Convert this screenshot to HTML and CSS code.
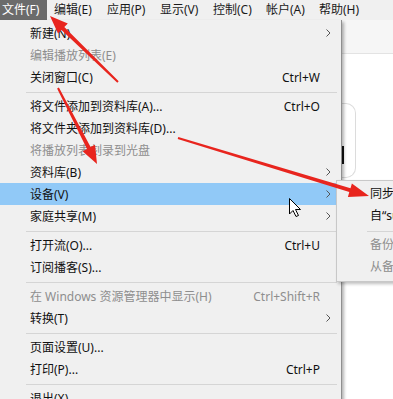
FILE: index.html
```html
<!DOCTYPE html>
<html>

<head>
    <title>文件菜单</title>
    <link rel="stylesheet" href="styles.css">
</head>

<body>
    <div class="menubar">
        <div class="top-item active">文件(F)</div>
        <div class="top-item">编辑(E)</div>
        <div class="top-item">应用(P)</div>
        <div class="top-item">显示(V)</div>
        <div class="top-item">控制(C)</div>
        <div class="top-item">帐户(A)</div>
        <div class="top-item">帮助(H)</div>
    </div>

    <div class="stage">
        <div class="menu">
            <div class="item"><span class="label">新建(N)</span><span class="key"></span><span class="chev"><svg width="5" height="8" viewBox="0 0 5 8"><path d="M0.5 0.5 L4 4 L0.5 7.5" /></svg></span></div>
            <div class="item disabled"><span class="label">编辑播放列表(E)</span><span class="key"></span><span class="chev"></span></div>
            <div class="item"><span class="label">关闭窗口(C)</span><span class="key">Ctrl+W</span><span class="chev"></span></div>
            <div class="sep"></div>
            <div class="item"><span class="label">将文件添加到资料库(A)...</span><span class="key">Ctrl+O</span><span class="chev"></span></div>
            <div class="item"><span class="label">将文件夹添加到资料库(D)...</span><span class="key"></span><span class="chev"></span></div>
            <div class="item disabled"><span class="label">将播放列表刻录到光盘</span><span class="key"></span><span class="chev"></span></div>
            <div class="item"><span class="label">资料库(B)</span><span class="key"></span><span class="chev"><svg width="5" height="8" viewBox="0 0 5 8"><path d="M0.5 0.5 L4 4 L0.5 7.5" /></svg></span></div>
            <div class="item hover"><span class="label">设备(V)</span><span class="key"></span><span class="chev"><svg width="5" height="8" viewBox="0 0 5 8"><path d="M0.5 0.5 L4 4 L0.5 7.5" /></svg></span></div>
            <div class="item"><span class="label">家庭共享(M)</span><span class="key"></span><span class="chev"><svg width="5" height="8" viewBox="0 0 5 8"><path d="M0.5 0.5 L4 4 L0.5 7.5" /></svg></span></div>
            <div class="sep"></div>
            <div class="item"><span class="label">打开流(O)...</span><span class="key">Ctrl+U</span><span class="chev"></span></div>
            <div class="item"><span class="label">订阅播客(S)...</span><span class="key"></span><span class="chev"></span></div>
            <div class="sep"></div>
            <div class="item disabled"><span class="label">在 Windows 资源管理器中显示(H)</span><span class="key">Ctrl+Shift+R</span><span class="chev"></span></div>
            <div class="item"><span class="label">转换(T)</span><span class="key"></span><span class="chev"><svg width="5" height="8" viewBox="0 0 5 8"><path d="M0.5 0.5 L4 4 L0.5 7.5" /></svg></span></div>
            <div class="sep"></div>
            <div class="item"><span class="label">页面设置(U)...</span><span class="key"></span><span class="chev"></span></div>
            <div class="item"><span class="label">打印(P)...</span><span class="key">Ctrl+P</span><span class="chev"></span></div>
            <div class="sep"></div>
            <div class="item"><span class="label">退出(X)</span><span class="key"></span><span class="chev"></span></div>
        </div>

        <div class="side">
            <div class="side-top"></div>
            <div class="card">
                <div class="mark"></div>
            </div>
        </div>

        <!-- submenu of 设备 -->
        <div class="submenu">
            <div class="sub-item">同步“iPhone”</div>
            <div class="sub-item">自“sun的 iPhone”传输购买项目</div>
            <div class="sub-sep"></div>
            <div class="sub-item disabled">备份</div>
            <div class="sub-item disabled">从备份恢复...</div>
        </div>
    </div>

    <!-- annotation arrows + mouse pointer -->
    <svg class="annot" width="393" height="399" viewBox="0 0 393 399">
        <polygon class="arrow" points="118.7,81.3 64.3,27.1 67.8,23.5 50,16 58.0,33.5 61.5,29.9 117.3,82.7" />
        <polygon class="arrow" points="57.1,88.5 87.0,148.9 82.6,151.2 97,164 95.0,144.8 90.6,147.1 58.9,87.5" />
        <polygon class="arrow" points="177.7,139.0 349.3,192.1 347.9,196.9 369,196 351.9,183.5 350.5,188.3 178.3,137.0" />
        <path class="pointer" d="M289.5 198.5 L289.5 214 L293 210.5 L296 216.5 L298.5 215.5 L295.5 209.5 L300.5 209.5 Z" />
    </svg>
</body>

</html>
```

FILE: styles.css
```css
body {
    margin: 0;
    width: 393px;
    height: 399px;
    overflow: hidden;
    position: relative;
    background: #ffffff;
    font-family: "Noto Sans", "Noto Sans CJK SC", sans-serif;
    font-size: 12px;
    color: #111;
}

.menubar {
    display: flex;
    height: 20px;
    background: #f0f0f0;
}

.top-item {
    width: 53px;
    padding-left: 7px;
    box-sizing: border-box;
    line-height: 20px;
    white-space: nowrap;
    color: #1a1a1a;
}

.top-item.active {
    width: 47px;
    padding-left: 2px;
    background: #6b6b6b;
    color: #fff;
}

.stage {
    display: flex;
    position: relative;
}

.menu {
    width: 342px;
    flex: none;
    box-sizing: border-box;
    padding: 2px 4px 0 0;
    background: #f0f0f0;
    border-right: 1px solid #8f8f8f;
    box-shadow: 2px 2px 3px rgba(0, 0, 0, 0.3);
    position: relative;
    z-index: 2;
    height: 400px;
}

.item {
    display: grid;
    grid-template-columns: 1fr auto 17px;
    align-items: center;
    height: 22px;
    padding-left: 30px;
    white-space: nowrap;
}

.item.disabled {
    color: #8e8e8e;
}

.item.hover {
    background: #91c9f7;
}

.key {
    text-align: right;
}

.chev {
    display: flex;
    align-items: center;
    padding-left: 6px;
}

.chev path {
    fill: none;
    stroke: #555;
    stroke-width: 1;
}

.sep {
    height: 0;
    margin: 4px 0 2px 26px;
    border-top: 1px solid #d5d5d5;
}

.side {
    flex: 1;
    display: flex;
    flex-direction: column;
}

.side-top {
    height: 33px;
    background: #f6f6f6;
    border-bottom: 1px solid #e3e3e3;
}

.card {
    margin-top: 49px;
    width: 14px;
    height: 75px;
    box-sizing: border-box;
    border: 1px solid #dcdcdc;
    border-left: none;
    border-radius: 0 10px 10px 0;
    display: flex;
    flex-direction: column;
}

.mark {
    margin-top: 42px;
    width: 2px;
    height: 18px;
    background: #111;
}

.submenu {
    position: absolute;
    left: 336px;
    top: 160px;
    width: 240px;
    padding: 2px 0 3px;
    background: #f0f0f0;
    border: 1px solid #c8c8c8;
    box-shadow: 2px 2px 3px rgba(0, 0, 0, 0.25);
    z-index: 3;
}

.sub-item {
    height: 22px;
    line-height: 22px;
    padding-left: 33px;
    white-space: nowrap;
}

.sub-item.disabled {
    color: #8e8e8e;
}

.sub-sep {
    margin: 4px 0 2px 30px;
    border-top: 1px solid #d5d5d5;
}

.annot {
    position: absolute;
    left: 0;
    top: 0;
    z-index: 10;
    pointer-events: none;
}

.arrow {
    fill: #e8251e;
}

.pointer {
    fill: #fff;
    stroke: #000;
    stroke-width: 1;
    stroke-linejoin: miter;
}
```
